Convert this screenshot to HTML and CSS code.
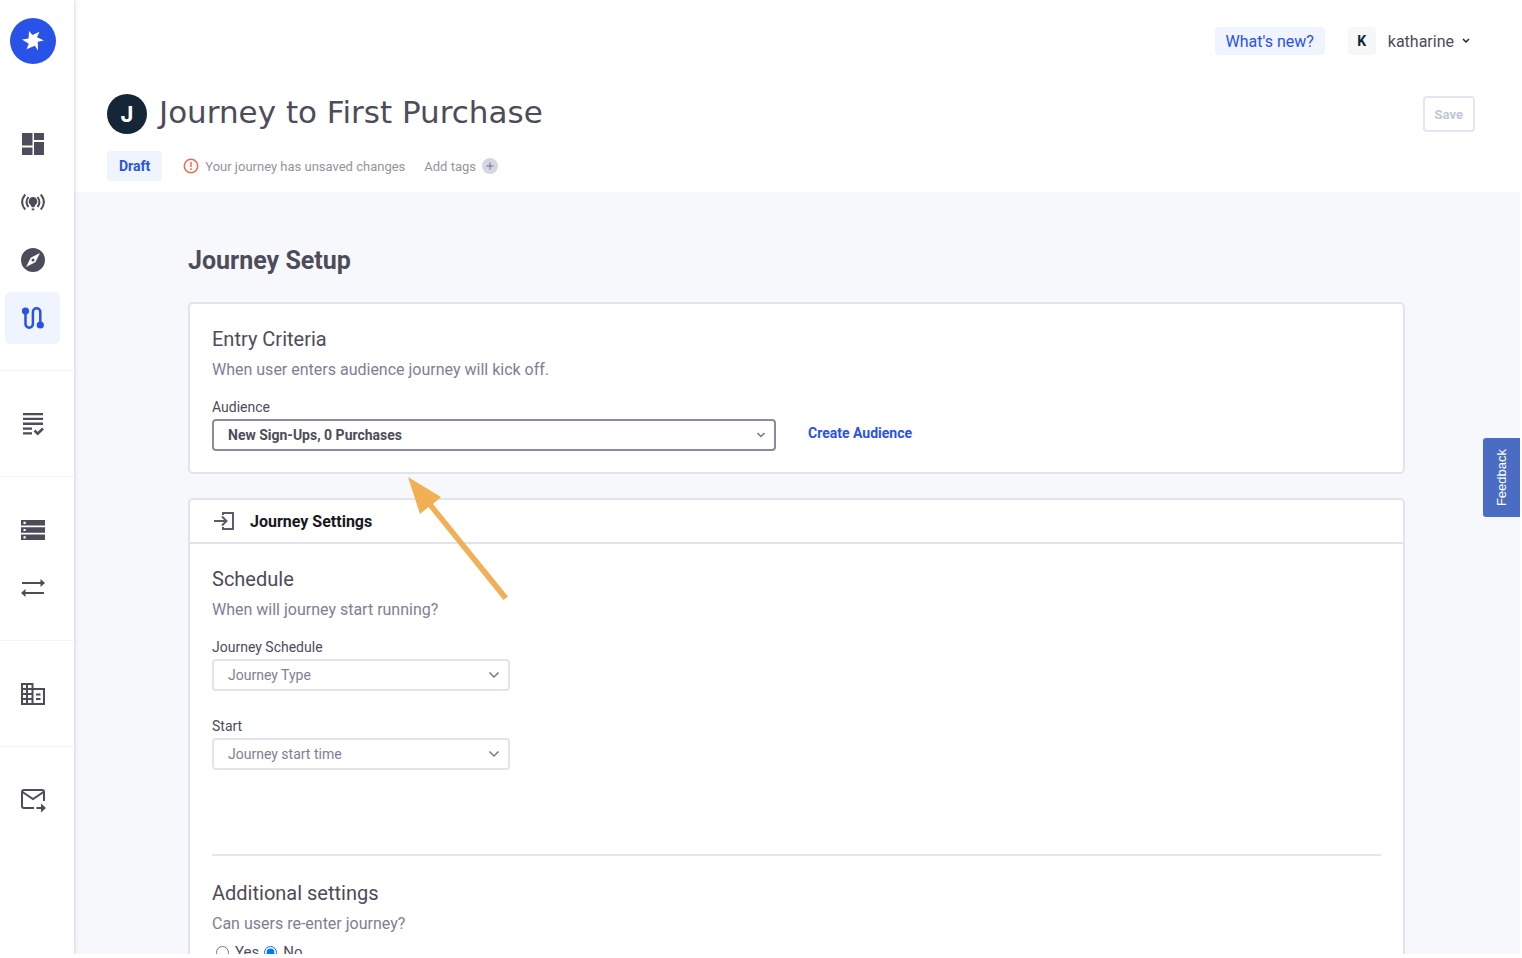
FILE: index.html
```html
<!DOCTYPE html>
<html lang="en">
<head>
<meta charset="utf-8">
<title>Journey to First Purchase</title>
<link rel="stylesheet" href="styles.css">
</head>
<body>
<div class="app">
  <nav class="sidebar" aria-label="Main">
    <a class="brand" href="#" aria-label="Home">
      <svg width="22" height="20" viewBox="0 0 22 20" fill="#fff"><path d="M7 0l3.500 4L17.500.8 15 6.300 22 9.500l-6.200 1.200.2 8.800-3.200-4.700-8.300 3.400 2.300-5.400L0 8.400l6.600-.8z"/></svg>
    </a>
    <div class="nav-group">
      <a class="nav-item" href="#" aria-label="Dashboard"><svg class="icon" viewBox="0 0 24 24"><path d="M1 1h10.500v12.500H1zM13 1h10v7H13zM13 10h10v13H13zM1 15.500h10.500V23H1z"/></svg></a>
      <a class="nav-item" href="#" aria-label="Broadcasts"><svg class="icon" viewBox="0 0 24 24"><path d="M12 7a4.300 4.300 0 0 0-2.600 7.700l1.400 2.600h2.400l1.400-2.600A4.300 4.300 0 0 0 12 7zM10.700 18.500h2.600v1.700h-2.600z"/><path d="M4.200 4.500Q-2 12 4.200 19.500M7.500 7Q3.600 12 7.500 17M19.800 4.500q6.200 7.500 0 15M16.500 7q3.900 5 0 10" fill="none" stroke="currentColor" stroke-width="2"/></svg></a>
      <a class="nav-item" href="#" aria-label="Explore"><svg class="icon" viewBox="0 0 24 24"><path fill-rule="evenodd" d="M12 0a12 12 0 1 0 0 24 12 12 0 0 0 0-24zM19 5l-4.700 9.300L5 19l4.700-9.300zM12 10.500a1.500 1.500 0 1 0 0 3 1.500 1.500 0 0 0 0-3z"/></svg></a>
      <a class="nav-item active" href="#" aria-label="Journeys"><svg class="icon" viewBox="0 0 24 24"><path d="M4.500 5v13a3.700 3.700 0 0 0 7.400 0V6a3.700 3.700 0 0 1 7.400 0v13" fill="none" stroke="currentColor" stroke-width="2.500"/><circle cx="4.500" cy="5" r="3.600"/><circle cx="19.300" cy="19" r="3.600"/></svg></a>
    </div>
    <div class="nav-group">
      <a class="nav-item" href="#" aria-label="Templates"><svg class="icon" viewBox="0 0 24 24"><path d="M2 1h20v2.300H2zM2 5.800h20v2.300H2zM2 10.600h20v2.300H2zM2 15.400h9v2.300H2zM2 20.200h9v2.300H2z"/><path d="M13.500 18.500l3.200 3.200 5.300-5.200" fill="none" stroke="currentColor" stroke-width="2.500"/></svg></a>
    </div>
    <div class="nav-group">
      <a class="nav-item" href="#" aria-label="Data"><svg class="icon" viewBox="0 0 24 24"><path fill-rule="evenodd" d="M0 2h24v5.500H0zM2.500 3.700v2.200h2.200V3.700zM0 9.200h24v5.500H0zM2.500 10.900v2.200h2.200v-2.200zM0 16.500h24V22H0zM2.500 18.200v2.200h2.200v-2.200z"/></svg></a>
      <a class="nav-item" href="#" aria-label="Transfers"><svg class="icon" viewBox="0 0 24 24"><path d="M1 6h18.500V3l4.500 4-4.500 4V8H1zM23 16H4.500v-3L0 17l4.500 4v-3H23z"/></svg></a>
    </div>
    <div class="nav-group">
      <a class="nav-item" href="#" aria-label="Company"><svg class="icon" viewBox="0 0 24 24"><path d="M1 2h10.500v20H1zM11.500 7H23v15H11.500M1 7h10M1 12h10M1 17h10M6 2v20M15 12.500h4.500M15 17h4.500" fill="none" stroke="currentColor" stroke-width="2"/></svg></a>
    </div>
    <div class="nav-group">
      <a class="nav-item" href="#" aria-label="Messages"><svg class="icon" viewBox="0 0 24 24"><path d="M13 20H3q-2 0-2-2V4q0-2 2-2h18q2 0 2 2v9M1.500 4L12 11 22.500 4" fill="none" stroke="currentColor" stroke-width="2"/><path d="M15.500 19H20v-3.500l5 4.500-5 4.500V21h-4.500z"/></svg></a>
    </div>
  </nav>

  <div class="page">
    <header class="header">
      <div class="topbar">
        <button class="whats-new" type="button">What's new?</button>
        <button class="account" type="button">
          <span class="account-badge">K</span>
          <span>katharine</span>
          <svg width="8" height="6" viewBox="0 0 8 6" fill="none" stroke="#152636" stroke-width="1.500"><path d="M1 1l3 3 3-3"/></svg>
        </button>
      </div>
      <div class="title-row">
        <span class="avatar">J</span>
        <h1 class="title">Journey to First Purchase</h1>
        <button class="save" type="button" disabled>Save</button>
      </div>
      <div class="status-row">
        <span class="draft">Draft</span>
        <span class="unsaved">
          <svg width="16" height="16" viewBox="0 0 16 16" fill="none" stroke="#ee6b4d" stroke-width="1.500"><circle cx="8" cy="8" r="6.700"/><path d="M8 4v5M8 10.300v1.700"/></svg>
          Your journey has unsaved changes
        </span>
        <button class="add-tags" type="button">Add tags
          <svg width="16" height="16" viewBox="0 0 16 16"><circle cx="8" cy="8" r="8" fill="#d3d6e4"/><path d="M4.500 8h7M8 4.500v7" stroke="#6f6f85"/></svg>
        </button>
      </div>
    </header>

    <main class="content">
      <h2 class="section-title">Journey Setup</h2>

      <section class="card">
        <div class="card-body">
          <h3 class="heading">Entry Criteria</h3>
          <p class="hint">When user enters audience journey will kick off.</p>
          <label class="label" for="audience">Audience</label>
          <div class="audience-row">
            <div class="select-wrap wide">
              <select class="select selected" id="audience"><option>New Sign-Ups, 0 Purchases</option></select>
              <svg class="chevron" width="10" height="6" viewBox="0 0 10 6"><path d="M1.500 1L5 4.500 8.500 1"/></svg>
            </div>
            <a class="create" href="#">Create Audience</a>
          </div>
        </div>
      </section>

      <section class="card settings">
        <div class="card-head">
          <svg width="20" height="20" viewBox="0 0 20 20" fill="none" stroke="#5c5b6a" stroke-width="2"><path d="M0 10h12M8 5.500l4.500 4.500L8 14.500M9 4V2h10v16H9v-2"/></svg>
          <h3 class="card-title">Journey Settings</h3>
        </div>
        <div class="card-body">
          <h3 class="heading">Schedule</h3>
          <p class="hint">When will journey start running?</p>
          <div class="field">
            <label class="label" for="schedule">Journey Schedule</label>
            <div class="select-wrap">
              <select class="select" id="schedule"><option>Journey Type</option></select>
              <svg class="chevron" width="12" height="8" viewBox="0 0 12 8"><path d="M1.500 1.500L6 6l4.500-4.500"/></svg>
            </div>
          </div>
          <div class="field">
            <label class="label" for="start">Start</label>
            <div class="select-wrap">
              <select class="select" id="start"><option>Journey start time</option></select>
              <svg class="chevron" width="12" height="8" viewBox="0 0 12 8"><path d="M1.500 1.500L6 6l4.500-4.500"/></svg>
            </div>
          </div>
          <div class="additional">
            <h3 class="heading">Additional settings</h3>
            <p class="hint" id="reenter">Can users re-enter journey?</p>
            <div class="radios" role="radiogroup" aria-labelledby="reenter">
              <label class="radio"><input type="radio" name="reenter">Yes</label>
              <label class="radio"><input type="radio" name="reenter" checked>No</label>
            </div>
          </div>
        </div>
        <svg class="pointer" width="102" height="124" viewBox="0 0 102 124" fill="#f3af56"><path d="M0 0l33 20-8 7 75 92.500-4.500 3.500L20.500 30 12 37z"/></svg>
      </section>
    </main>
  </div>
</div>
<button class="feedback" type="button">Feedback</button>
</body>
</html>
```
FILE: styles.css
```css
* { box-sizing: border-box; }
body { margin: 0; padding: 0 2px 4px 0; font-family: Roboto, "Liberation Sans", sans-serif; color: #4d4c5a; background: #fff; }
h1, h2, h3, p { margin: 0; }
button { font: inherit; color: inherit; border: 0; padding: 0; background: none; cursor: pointer; }
a { text-decoration: none; }
svg { display: block; flex: none; overflow: visible; }

.app { display: flex; height: calc(100vh - 4px); overflow: hidden; background: #f7f8fc; }

.sidebar { flex: none; width: 74px; background: #fff; box-shadow: 0 0 4px rgba(60, 64, 90, .3); z-index: 1; }
.brand { display: grid; place-items: center; width: 46px; height: 46px; margin: 18px 0 54px 10px; border-radius: 50%; background: #2952e8; }
.nav-group { display: grid; gap: 6px; padding: 0 0 26px 5px; }
.nav-group + .nav-group { border-top: 1px solid #f4f4f8; padding-top: 27px; }
.nav-item { display: grid; place-items: center; width: 55px; height: 52px; border-radius: 5px; color: #4d4c5a; }
.nav-item.active { background: #eff4fe; color: #2952e8; }
.icon { width: 24px; height: 24px; fill: currentColor; }

.page { flex: 1; min-width: 0; }
.header { height: 192px; padding: 27px 45px 0 33px; background: #fff; }
.topbar { display: flex; justify-content: flex-end; align-items: center; gap: 23px; height: 28px; font-size: 16px; }
.whats-new { height: 28px; padding: 0 11px; border-radius: 4px; background: #eff4fe; color: #2952e8; }
.account { display: flex; align-items: center; gap: 12px; padding-right: 5px; }
.account svg { margin-left: -4px; }
.account-badge { width: 28px; height: 28px; border-radius: 4px; background: #f6f7f9; color: #152636; font-size: 14px; font-weight: 700; line-height: 28px; }
.title-row { display: flex; align-items: center; gap: 12px; margin-top: 39px; height: 40px; }
.avatar { flex: none; width: 40px; height: 40px; border-radius: 50%; background: #152636; color: #fff; font: 700 22px/40px Inter, sans-serif; text-align: center; }
.title { flex: 1; font: 400 31px/36px "DejaVu Sans", sans-serif; padding-bottom: 4px; }
.save { height: 36px; padding: 0 10px; border: 2px solid #e3e5f0; border-radius: 4px; color: #c0c5d9; font-size: 13px; font-weight: 700; }
.status-row { display: flex; align-items: center; margin-top: 17px; height: 30px; font-size: 13px; color: #94949d; }
.draft { padding: 0 12px; border-radius: 4px; background: #eff4fe; color: #2952e8; font-size: 14px; font-weight: 700; line-height: 30px; }
.unsaved { display: flex; align-items: center; gap: 6px; margin: 0 19px 0 21px; }
.add-tags { display: flex; align-items: center; gap: 6px; }

.content { padding: 52px 115px 0 114px; }
.section-title { font-size: 25px; line-height: 34px; font-weight: 700; }
.card { position: relative; margin-top: 24px; border: 2px solid #e1e4ec; border-radius: 5px; background: #fff; }
.card-body { padding: 22px 22px 21px; }
.card-head { display: flex; align-items: center; gap: 16px; height: 44px; padding: 0 24px; border-bottom: 2px solid #e1e4ec; }
.card-title { font-size: 16px; font-weight: 700; color: #18181c; }
.heading { font-size: 20px; line-height: 26px; font-weight: 400; }
.hint { margin-top: 6px; font-size: 16px; line-height: 24px; color: #807e96; }
.label { display: block; margin-top: 17px; font-size: 14px; line-height: 16px; }
.audience-row { display: flex; align-items: center; gap: 32px; }
.select-wrap { position: relative; width: 298px; margin-top: 4px; }
.select-wrap.wide { width: 564px; }
.select { width: 100%; height: 32px; padding: 0 14px; border: 2px solid #e1e4ec; border-radius: 4px; background: #fff; color: #807e96; font: 14px Roboto, sans-serif; appearance: none; }
.select.selected { border: 2px solid #8c89a1; color: #4d4c5a; font-weight: 700; }
.chevron { position: absolute; right: 10px; top: 50%; transform: translateY(-50%); fill: none; stroke: #77758a; stroke-width: 1.500; pointer-events: none; }
.create { color: #2952e8; font-size: 14px; font-weight: 700; }
.field + .field { margin-top: 27px; }
.additional { margin-top: 84px; border-top: 2px solid #e3e7ed; padding-top: 24px; }
.radios { display: flex; gap: 5px; margin-top: 6px; font-size: 15px; line-height: 20px; }
.radio { display: flex; align-items: center; gap: 6px; }
.radio input { margin: 0 0 0 4px; }
.radio + .radio input { margin-left: 0; }
.pointer { position: absolute; left: 218px; top: -23px; }

.feedback { position: fixed; right: 2px; top: 438px; width: 37px; height: 79px; border-radius: 3px 0 0 3px; background: #4a6dc3; color: #fff; font: 13px "Liberation Sans", sans-serif; writing-mode: sideways-lr; }
```
